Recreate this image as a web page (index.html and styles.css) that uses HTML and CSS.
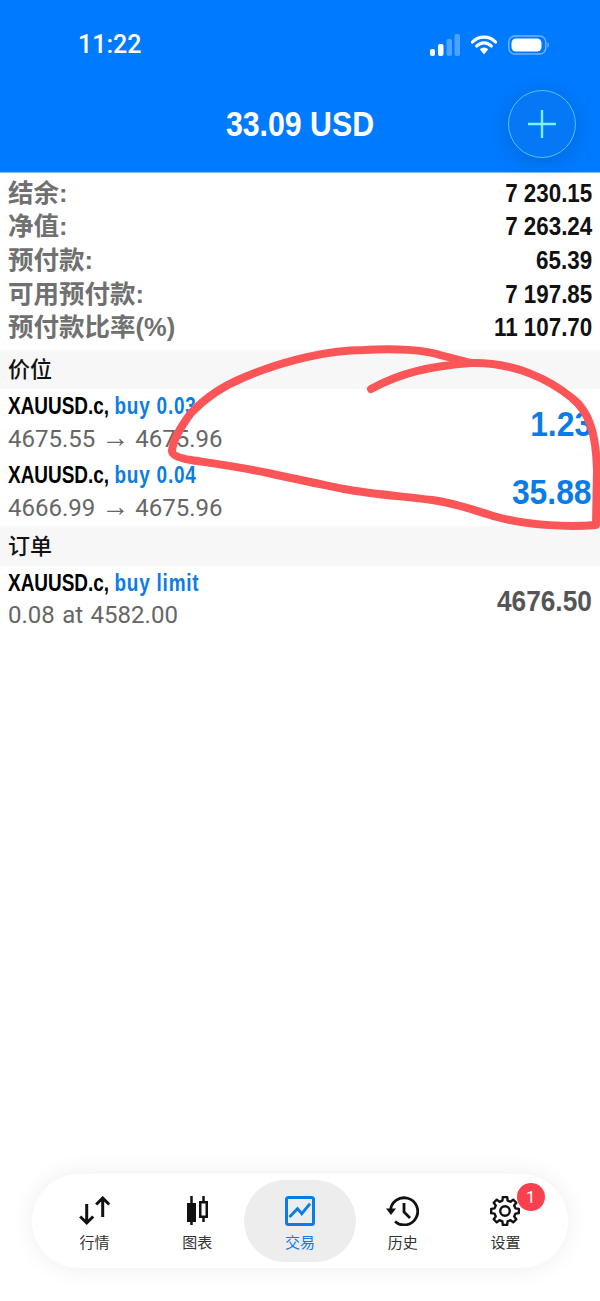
FILE: index.html
```html
<!DOCTYPE html>
<html lang="zh-CN">
<head>
  <meta charset="UTF-8">
  <meta name="viewport" content="width=device-width, initial-scale=1.0">
  <title>交易</title>
  <link rel="stylesheet" href="styles.css">
</head>
<body>

  <!-- Header -->
  <header class="top-bar">
    <div class="status-bar">
      <span class="clock">11:22</span>
      <div class="status-icons">
        <svg width="30" height="22" viewBox="0 0 30 22">
          <rect x="0" y="15" width="5" height="7" rx="2" fill="#fff"/>
          <rect x="8" y="10" width="5.500" height="12" rx="2" fill="#fff"/>
          <rect x="16.500" y="5" width="5.500" height="17" rx="2" fill="#4da3ff"/>
          <rect x="24.500" y="0" width="5.500" height="22" rx="2" fill="#4da3ff"/>
        </svg>
        <svg width="26" height="20" viewBox="0 0 26 20">
          <path d="M1.500 7a16 16 0 0 1 23 0M5.800 11a10 10 0 0 1 14.400 0" fill="none" stroke="#fff" stroke-width="3.200" stroke-linecap="round"/>
          <path d="M8.800 14.200a6 6 0 0 1 8.400 0L13 19.500z" fill="#fff"/>
        </svg>
        <svg width="42" height="20" viewBox="0 0 42 20">
          <rect x="0.750" y="1" width="37" height="18" rx="6" fill="none" stroke="#6db2ff" stroke-width="1.500"/>
          <rect x="3.500" y="3.500" width="30" height="13" rx="4.500" fill="#fff"/>
          <path d="M39.500 7v6a3 3 0 0 0 1.500-3 3 3 0 0 0-1.500-3z" fill="#6db2ff"/>
        </svg>
      </div>
    </div>
    <h1 class="balance">33.09 USD</h1>
    <button class="add-btn">
      <svg width="30" height="30" viewBox="0 0 30 30">
        <path d="M15 1v28M1 15h28" stroke="#7cf2f5" stroke-width="2.400" fill="none"/>
      </svg>
    </button>
  </header>

  <!-- Account summary -->
  <section class="summary">
    <div class="summary-row"><span class="label">结余:</span><span class="value">7 230.15</span></div>
    <div class="summary-row"><span class="label">净值:</span><span class="value">7 263.24</span></div>
    <div class="summary-row"><span class="label">预付款:</span><span class="value">65.39</span></div>
    <div class="summary-row"><span class="label">可用预付款:</span><span class="value">7 197.85</span></div>
    <div class="summary-row"><span class="label">预付款比率(%)</span><span class="value">11 107.70</span></div>
  </section>

  <h2 class="section-title"><span>价位</span></h2>
  <div class="trade-row">
    <div>
      <div class="trade-name">XAUUSD.c, <span class="side">buy 0.03</span></div>
      <div class="trade-detail">4675.55 <span class="arrow">→</span> 4675.96</div>
    </div>
    <div class="profit">1.23</div>
  </div>
  <div class="trade-row">
    <div>
      <div class="trade-name">XAUUSD.c, <span class="side">buy 0.04</span></div>
      <div class="trade-detail">4666.99 <span class="arrow">→</span> 4675.96</div>
    </div>
    <div class="profit">35.88</div>
  </div>

  <h2 class="section-title"><span>订单</span></h2>
  <div class="trade-row">
    <div>
      <div class="trade-name">XAUUSD.c, <span class="side">buy limit</span></div>
      <div class="trade-detail">0.08 at 4582.00</div>
    </div>
    <div class="profit pending">4676.50</div>
  </div>

  <!-- Hand drawn mark on top of the screenshot -->
  <svg class="scribble" width="600" height="1301" viewBox="0 0 600 1301">
    <path d="M371 389C400 373 430 366 471 363C515 362 550 380 572 398C590 412 596 435 597 470L596 525C570 527 530 526 497 517C470 509 455 503 432 500C400 496 370 494 344 489C315 483 290 478 268 473C240 467 210 463 191 460C178 458 172 455 172 451C173 440 182 425 191 413C205 398 225 385 245 377C285 360 330 350 364 350C395 348 425 350 440 355L471 363" fill="none" stroke="#fb5557" stroke-width="8" stroke-linecap="round" stroke-linejoin="round"/>
  </svg>

  <!-- Bottom tabs -->
  <nav class="tab-bar">
    <a class="tab">
      <svg width="31" height="30" viewBox="0 0 31 30">
        <path d="M7.700 8v19M1.200 20.500l6.500 6.500 6.500-6.500M23.700 21V2M17.200 8.500l6.500-6.500 6.500 6.500" fill="none" stroke="#111" stroke-width="3"/>
      </svg>
      <span>行情</span>
    </a>
    <a class="tab">
      <svg width="21" height="30" viewBox="0 0 21 30">
        <path d="M4.500 0v29M16.500 0v26" stroke="#111" stroke-width="2.500" fill="none"/>
        <rect x="0" y="7" width="9" height="19" fill="#111"/>
        <rect x="13.250" y="6.250" width="6.500" height="14.500" fill="#fff" stroke="#111" stroke-width="2.500"/>
      </svg>
      <span>图表</span>
    </a>
    <a class="tab active">
      <svg width="30" height="30" viewBox="0 0 30 30">
        <rect x="1.500" y="1.500" width="27" height="27" rx="2" fill="none" stroke="#0a7ce8" stroke-width="3"/>
        <path d="M4.500 21l8-8.300 4.300 5L25 7.700" fill="none" stroke="#0a7ce8" stroke-width="2.800"/>
      </svg>
      <span>交易</span>
    </a>
    <a class="tab">
      <svg width="33" height="30" viewBox="0 0 33 30">
        <path d="M4.500 15A13.600 13.600 0 1 1 9 25.500" fill="none" stroke="#111" stroke-width="2.800"/>
        <path d="M0 12.500h10l-5 6.500z" fill="#111"/>
        <path d="M18 7v9l6 6" fill="none" stroke="#111" stroke-width="2.800"/>
      </svg>
      <span>历史</span>
    </a>
    <a class="tab">
      <svg width="30" height="30" viewBox="0 0 24 24">
        <path d="M9.920 3.660L10.250 .94H13.750L14.080 3.660L16.430 4.630L18.580 2.940L21.060 5.420L19.370 7.570L20.340 9.920L23.060 10.250V13.750L20.340 14.080L19.370 16.430L21.060 18.580L18.580 21.060L16.430 19.370L14.080 20.340L13.750 23.060H10.250L9.920 20.340L7.570 19.370L5.420 21.060L2.940 18.580L4.630 16.430L3.660 14.080L.94 13.750V10.250L3.660 9.920L4.630 7.570L2.940 5.420L5.420 2.940L7.570 4.630Z" fill="none" stroke="#111" stroke-width="1.900" stroke-linejoin="round"/>
        <circle cx="12" cy="12" r="3.800" fill="none" stroke="#111" stroke-width="1.900"/>
      </svg>
      <span>设置</span>
      <b class="badge">1</b>
    </a>
  </nav>

</body>
</html>
```

FILE: styles.css
```css
* {
  box-sizing: border-box;
}

body {
  margin: 0;
  height: 1301px;
  overflow: hidden;
  position: relative;
  background: #fff;
  font-family: "Liberation Sans", "Noto Sans CJK SC", sans-serif;
}

.top-bar {
  height: 172px;
  background: #007bff;
  color: #fff;
  position: relative;
  box-shadow: 0 1px 0 #7cc0ff;
}

.status-bar {
  display: flex;
  justify-content: space-between;
  align-items: center;
  padding: 30px 50px 0 78px;
}

.clock {
  font-family: Roboto, sans-serif;
  font-size: 25px;
  font-weight: 500;
  line-height: 30px;
}

.status-icons {
  display: flex;
  align-items: center;
  gap: 11px;
}

.balance {
  margin: 44px 0 0;
  text-align: center;
  font-size: 35px;
  line-height: 40px;
  font-weight: 700;
  transform: scaleX(0.865);
}

.add-btn {
  position: absolute;
  top: 90px;
  left: 508px;
  width: 68px;
  height: 68px;
  padding: 0;
  display: flex;
  align-items: center;
  justify-content: center;
  border-radius: 50%;
  border: 1.500px solid #54c3f5;
  background: #0579f5;
  box-shadow: 0 4px 22px rgba(0, 60, 130, 0.3);
}

.summary {
  padding: 4px 8px 6px;
}

.summary-row {
  display: flex;
  justify-content: space-between;
  align-items: center;
  height: 33.600px;
}

.label {
  font-size: 25.500px;
  font-weight: 700;
  color: #707070;
  padding-bottom: 5px;
}

.value {
  font-size: 26px;
  font-weight: 700;
  color: #111;
  padding-top: 1px;
  transform: scaleX(0.86);
  transform-origin: right center;
}

.section-title {
  margin: 0;
  height: 39.500px;
  padding: 0 8px 5px;
  display: flex;
  align-items: center;
  background: #f7f7f7;
  font-size: 22px;
  font-weight: 500;
  color: #111;
}

.trade-row {
  height: 68.500px;
  padding: 0 8px;
  display: flex;
  justify-content: space-between;
  align-items: center;
}

.trade-name {
  font-size: 24px;
  line-height: 30px;
  font-weight: 700;
  color: #000;
  white-space: nowrap;
  transform: scaleX(0.79);
  transform-origin: left center;
}

.side {
  color: #0a7ce8;
  letter-spacing: 1px;
}

.trade-detail {
  font-family: Roboto, sans-serif;
  font-size: 24px;
  line-height: 34px;
  word-spacing: 1.500px;
  color: #666;
}

.arrow {
  font-family: "Liberation Sans", sans-serif;
  font-size: 28px;
  margin: 0 -1.500px;
}

.profit {
  font-size: 35px;
  font-weight: 700;
  color: #0a7ce8;
  transform: scaleX(0.91);
  transform-origin: right center;
}

.profit.pending {
  font-size: 29px;
  color: #555;
  padding-top: 3px;
  transform: scaleX(0.905);
}

.scribble {
  position: absolute;
  top: 0;
  left: 0;
  pointer-events: none;
}

.tab-bar {
  position: absolute;
  left: 32px;
  top: 1174px;
  width: 536px;
  height: 94px;
  display: flex;
  justify-content: center;
  align-items: center;
  background: #fff;
  border-radius: 47px;
  box-shadow: 0 0 24px rgba(0, 0, 0, 0.07);
}

.tab {
  position: relative;
  width: 102.700px;
  height: 82px;
  padding-top: 16px;
  display: flex;
  flex-direction: column;
  align-items: center;
  gap: 7px;
  color: #333;
  font-size: 15px;
  line-height: 20px;
}

.tab.active {
  width: 112px;
  margin: 0 -4.650px;
  background: #ededed;
  border-radius: 41px;
  color: #0a7ce8;
}

.badge {
  position: absolute;
  top: 3px;
  right: 12px;
  width: 28px;
  height: 28px;
  border-radius: 50%;
  background: #f9404f;
  color: #fff;
  font-family: Roboto, sans-serif;
  font-size: 17px;
  font-weight: 400;
  line-height: 28px;
  text-align: center;
}
```
